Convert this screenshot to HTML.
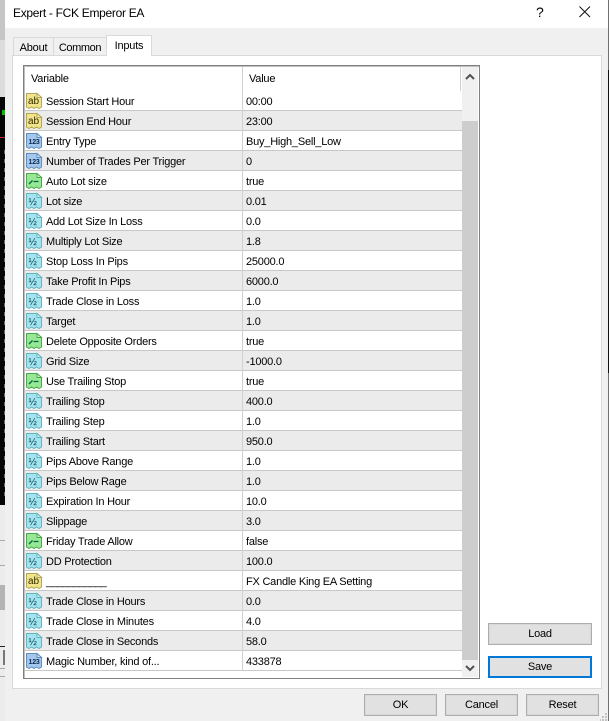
<!DOCTYPE html>
<html><head><meta charset="utf-8"><style>
*{box-sizing:border-box}
html,body{margin:0;padding:0}
body{width:609px;height:721px;position:relative;overflow:hidden;background:#f0f0f0;font-family:"Liberation Sans",sans-serif;font-size:11px;letter-spacing:-.22px;color:#000}
.a{position:absolute}
.r{position:absolute;left:25px;width:437px;height:20px;border-bottom:1px solid #c8c8c8;background:#fff}
.g{background:#ebebeb}
.r svg{position:absolute;left:1px;top:1px}
.r span{position:absolute;top:4px;line-height:14px;white-space:nowrap}
.n{left:21px}.v{left:221px}
.r:after{content:"";position:absolute;left:217px;top:0;width:1px;height:20px;background:#d0d0d0}
.b{position:absolute;background:#e1e1e1;border:1px solid #adadad;box-shadow:inset 0 0 0 1px #d8d8d8;text-align:center;line-height:20px}
.t{position:absolute;border:1px solid #d9d9d9;background:#f0f0f0;text-align:center;line-height:19px;padding-top:1px}
svg text{font-family:"Liberation Sans",sans-serif;letter-spacing:0}
.ab{font-size:10px;fill:#332a00}.n3{font-size:7px;font-weight:bold;fill:#0c2a50;letter-spacing:-.2px}.h{font-size:10px;fill:#04404c}
</style></head><body>
<svg width="0" height="0" style="position:absolute"><defs>
<symbol id="y" viewBox="0 0 17 17"><path d="M.5 1.5H11L15.5 5.5V15L13 16.5 10.5 15 8 16.5 5.5 15 3 16.5 .5 15Z" fill="#f0e48c" stroke="#b5a653"/><path d="M11 1.5V5.5H15.5Z" fill="#fbf6d0" stroke="#b5a653"/></symbol>
<symbol id="l" viewBox="0 0 17 17"><path d="M.5 1.5H11L15.5 5.5V15L13 16.5 10.5 15 8 16.5 5.5 15 3 16.5 .5 15Z" fill="#a4c8ec" stroke="#5f8dc0"/><path d="M11 1.5V5.5H15.5Z" fill="#dcecfa" stroke="#5f8dc0"/></symbol>
<symbol id="c" viewBox="0 0 17 17"><path d="M.5 1.5H11L15.5 5.5V15L13 16.5 10.5 15 8 16.5 5.5 15 3 16.5 .5 15Z" fill="#a4e4ee" stroke="#62b4c4"/><path d="M11 1.5V5.5H15.5Z" fill="#dcf6fa" stroke="#62b4c4"/></symbol>
<symbol id="e" viewBox="0 0 17 17"><path d="M.5 1.5H11L15.5 5.5V15L13 16.5 10.5 15 8 16.5 5.5 15 3 16.5 .5 15Z" fill="#96e896" stroke="#4aa84a"/><path d="M11 1.5V5.5H15.5Z" fill="#d8f8d8" stroke="#4aa84a"/><path d="M3 12 6.5 8.5M7.5 9.5H12.5" stroke="#063" stroke-width="1.3" fill="none"/></symbol>
</defs></svg>
<!-- left strip -->
<div class="a" style="left:0;top:0;width:5px;height:40px;background:#c6c6c6"></div>
<div class="a" style="left:0;top:40px;width:5px;height:57px;background:#dcdcdc"></div>
<div class="a" style="left:0;top:97px;width:5px;height:408px;background:#050505"></div>
<div class="a" style="left:2px;top:110px;width:3px;height:5px;background:#00c000"></div>
<div class="a" style="left:0;top:137px;width:5px;height:1px;background:#d02020"></div>
<div class="a" style="left:4px;top:150px;width:1px;height:350px;background:repeating-linear-gradient(#5a6a80 0 4px,transparent 4px 9px)"></div>
<div class="a" style="left:0;top:505px;width:5px;height:216px;background:#ececec"></div>
<div class="a" style="left:0;top:540px;width:5px;height:1px;background:#aaa"></div>
<div class="a" style="left:0;top:565px;width:5px;height:1px;background:#aaa"></div>
<div class="a" style="left:0;top:585px;width:5px;height:25px;background:#b4b4b4"></div>
<div class="a" style="left:0;top:646px;width:5px;height:1px;background:#222"></div>
<div class="a" style="left:3px;top:650px;width:2px;height:15px;background:#777"></div>
<div class="a" style="left:0;top:668px;width:5px;height:1px;background:#aaa"></div>
<div class="a" style="left:0;top:676px;width:5px;height:1px;background:#aaa"></div>
<!-- right strip -->
<div class="a" style="left:608px;top:0;width:1px;height:721px;background:#707070"></div>
<div class="a" style="left:608px;top:70px;width:1px;height:303px;background:#111"></div>
<!-- title -->
<div class="a" style="left:5px;top:0;width:603px;height:28px;background:#fff"></div>
<div class="a" style="left:5px;top:28px;width:603px;height:693px;background:#f0f0f0"></div>
<div class="a" style="left:13px;top:5px;font-size:12px;line-height:16px;white-space:nowrap;letter-spacing:-.3px">Expert - FCK Emperor EA</div>
<div class="a" style="left:536px;top:4px;font-size:14px;line-height:16px">?</div>
<svg class="a" style="left:579px;top:6px" width="12" height="12"><path d="M.5.5 11 11M11 .5.5 11" stroke="#111" fill="none"/></svg>
<!-- panel -->
<div class="a" style="left:12px;top:55px;width:590px;height:634px;background:#fff;border:1px solid #d9d9d9"></div>
<div class="t" style="left:13px;top:37px;width:41px;height:19px">About</div>
<div class="t" style="left:53px;top:37px;width:54px;height:19px;letter-spacing:-.4px">Common</div>
<div class="t" style="left:106px;top:35px;width:46px;height:21px;background:#fff;border-bottom:0;z-index:2;line-height:19px">Inputs</div>
<!-- grid -->
<div class="a" style="left:23px;top:65px;width:457px;height:614px;background:#fff;border:1px solid #808080;box-shadow:inset 1px 1px 0 #c0c0c0"></div>
<div class="a" style="left:31px;top:72px;line-height:14px">Variable</div>
<div class="a" style="left:249px;top:72px;line-height:14px">Value</div>
<div class="a" style="left:242px;top:67px;width:1px;height:24px;background:#d0d0d0"></div>
<div class="a" style="left:460px;top:67px;width:1px;height:24px;background:#d0d0d0"></div>
<div class="r" style="top:91px"><svg width="17" height="17"><use href="#y"/><text class="ab" x="2" y="12">ab</text></svg><span class="n">Session Start Hour</span><span class="v">00:00</span></div>
<div class="r g" style="top:111px"><svg width="17" height="17"><use href="#y"/><text class="ab" x="2" y="12">ab</text></svg><span class="n">Session End Hour</span><span class="v">23:00</span></div>
<div class="r" style="top:131px"><svg width="17" height="17"><use href="#l"/><text class="n3" x="2.5" y="12">123</text></svg><span class="n">Entry Type</span><span class="v">Buy_High_Sell_Low</span></div>
<div class="r g" style="top:151px"><svg width="17" height="17"><use href="#l"/><text class="n3" x="2.5" y="12">123</text></svg><span class="n">Number of Trades Per Trigger</span><span class="v">0</span></div>
<div class="r" style="top:171px"><svg width="17" height="17"><use href="#e"/></svg><span class="n">Auto Lot size</span><span class="v">true</span></div>
<div class="r g" style="top:191px"><svg width="17" height="17"><use href="#c"/><text class="h" x="2.5" y="13">½</text></svg><span class="n">Lot size</span><span class="v">0.01</span></div>
<div class="r" style="top:211px"><svg width="17" height="17"><use href="#c"/><text class="h" x="2.5" y="13">½</text></svg><span class="n">Add Lot Size In Loss</span><span class="v">0.0</span></div>
<div class="r g" style="top:231px"><svg width="17" height="17"><use href="#c"/><text class="h" x="2.5" y="13">½</text></svg><span class="n">Multiply Lot Size</span><span class="v">1.8</span></div>
<div class="r" style="top:251px"><svg width="17" height="17"><use href="#c"/><text class="h" x="2.5" y="13">½</text></svg><span class="n">Stop Loss In Pips</span><span class="v">25000.0</span></div>
<div class="r g" style="top:271px"><svg width="17" height="17"><use href="#c"/><text class="h" x="2.5" y="13">½</text></svg><span class="n">Take Profit In Pips</span><span class="v">6000.0</span></div>
<div class="r" style="top:291px"><svg width="17" height="17"><use href="#c"/><text class="h" x="2.5" y="13">½</text></svg><span class="n">Trade Close in Loss</span><span class="v">1.0</span></div>
<div class="r g" style="top:311px"><svg width="17" height="17"><use href="#c"/><text class="h" x="2.5" y="13">½</text></svg><span class="n">Target</span><span class="v">1.0</span></div>
<div class="r" style="top:331px"><svg width="17" height="17"><use href="#e"/></svg><span class="n">Delete Opposite Orders</span><span class="v">true</span></div>
<div class="r g" style="top:351px"><svg width="17" height="17"><use href="#c"/><text class="h" x="2.5" y="13">½</text></svg><span class="n">Grid Size</span><span class="v">-1000.0</span></div>
<div class="r" style="top:371px"><svg width="17" height="17"><use href="#e"/></svg><span class="n">Use Trailing Stop</span><span class="v">true</span></div>
<div class="r g" style="top:391px"><svg width="17" height="17"><use href="#c"/><text class="h" x="2.5" y="13">½</text></svg><span class="n">Trailing Stop</span><span class="v">400.0</span></div>
<div class="r" style="top:411px"><svg width="17" height="17"><use href="#c"/><text class="h" x="2.5" y="13">½</text></svg><span class="n">Trailing Step</span><span class="v">1.0</span></div>
<div class="r g" style="top:431px"><svg width="17" height="17"><use href="#c"/><text class="h" x="2.5" y="13">½</text></svg><span class="n">Trailing Start</span><span class="v">950.0</span></div>
<div class="r" style="top:451px"><svg width="17" height="17"><use href="#c"/><text class="h" x="2.5" y="13">½</text></svg><span class="n">Pips Above Range</span><span class="v">1.0</span></div>
<div class="r g" style="top:471px"><svg width="17" height="17"><use href="#c"/><text class="h" x="2.5" y="13">½</text></svg><span class="n">Pips Below Rage</span><span class="v">1.0</span></div>
<div class="r" style="top:491px"><svg width="17" height="17"><use href="#c"/><text class="h" x="2.5" y="13">½</text></svg><span class="n">Expiration In Hour</span><span class="v">10.0</span></div>
<div class="r g" style="top:511px"><svg width="17" height="17"><use href="#c"/><text class="h" x="2.5" y="13">½</text></svg><span class="n">Slippage</span><span class="v">3.0</span></div>
<div class="r" style="top:531px"><svg width="17" height="17"><use href="#e"/></svg><span class="n">Friday Trade Allow</span><span class="v">false</span></div>
<div class="r g" style="top:551px"><svg width="17" height="17"><use href="#c"/><text class="h" x="2.5" y="13">½</text></svg><span class="n">DD Protection</span><span class="v">100.0</span></div>
<div class="r" style="top:571px"><svg width="17" height="17"><use href="#y"/><text class="ab" x="2" y="12">ab</text></svg><span class="n" style="letter-spacing:-.65px">___________</span><span class="v">FX Candle King EA Setting</span></div>
<div class="r g" style="top:591px"><svg width="17" height="17"><use href="#c"/><text class="h" x="2.5" y="13">½</text></svg><span class="n">Trade Close in Hours</span><span class="v">0.0</span></div>
<div class="r" style="top:611px"><svg width="17" height="17"><use href="#c"/><text class="h" x="2.5" y="13">½</text></svg><span class="n">Trade Close in Minutes</span><span class="v">4.0</span></div>
<div class="r g" style="top:631px"><svg width="17" height="17"><use href="#c"/><text class="h" x="2.5" y="13">½</text></svg><span class="n">Trade Close in Seconds</span><span class="v">58.0</span></div>
<div class="r" style="top:651px"><svg width="17" height="17"><use href="#l"/><text class="n3" x="2.5" y="12">123</text></svg><span class="n">Magic Number, kind of...</span><span class="v">433878</span></div>
<!-- scrollbar -->
<div class="a" style="left:462px;top:67px;width:16px;height:610px;background:#f0f0f0"></div>
<div class="a" style="left:462px;top:121px;width:16px;height:539px;background:#cdcdcd"></div>
<svg class="a" style="left:465px;top:73px" width="10" height="8"><path d="M1 6 5 2 9 6" stroke="#505050" stroke-width="2" fill="none"/></svg>
<svg class="a" style="left:465px;top:664px" width="10" height="8"><path d="M1 2 5 6 9 2" stroke="#505050" stroke-width="2" fill="none"/></svg>
<!-- buttons -->
<div class="b" style="left:488px;top:623px;width:104px;height:22px">Load</div>
<div class="b" style="left:488px;top:656px;width:104px;height:22px;border:2px solid #0078d7;box-shadow:none;line-height:18px">Save</div>
<div class="b" style="left:364px;top:694px;width:73px;height:22px">OK</div>
<div class="b" style="left:445px;top:694px;width:73px;height:22px">Cancel</div>
<div class="b" style="left:526px;top:694px;width:73px;height:22px">Reset</div>
<svg class="a" style="left:600px;top:712px" width="8" height="9"><path d="M5 1h2v2H5zM2 4h2v2H2zM5 4h2v2H5zM0 7h1v2H0zM2 7h2v2H2zM5 7h2v2H5z" fill="#c4c4c4"/></svg>
</body></html>
